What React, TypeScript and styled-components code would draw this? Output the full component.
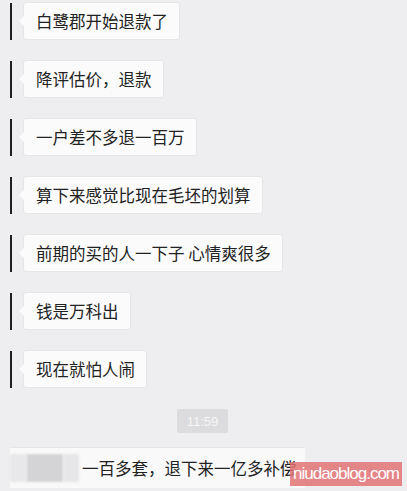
import React from 'react';
import styled, { createGlobalStyle } from 'styled-components';

const GlobalStyle = createGlobalStyle`
    html, body {
        margin: 0;
        padding: 0;
        background: #eeeef0;
        overflow: hidden;
    }
    body {
        font-family: "Noto Sans CJK SC", "Noto Sans", sans-serif;
    }
`;

const Screen = styled.div`
    position: relative;
    width: 407px;
    height: 491px;
    background: #eeeef0;
    padding-top: 2px;
    box-sizing: border-box;
    display: flex;
    flex-direction: column;
    gap: 20px;
`;

const Row = styled.div`
    display: flex;
    align-items: stretch;
    height: 38px;
`;

const Edge = styled.div`
    width: 1.5px;
    margin: 1px 11.5px 0 10px;
    background: #1f1f21;
`;

const Bubble = styled.div`
    position: relative;
    display: flex;
    align-items: center;
    padding: 0 11px 0 12px;
    background: #fbfbfb;
    border: 1px solid #e6e6e8;
    border-radius: 3px;
    font-size: 16.5px;
    color: #222222;
    white-space: nowrap;

    &::before {
        content: '';
        position: absolute;
        left: -5px;
        top: 13px;
        border-top: 5px solid transparent;
        border-bottom: 5px solid transparent;
        border-right: 5px solid #fbfbfb;
    }
`;

const TimeRow = styled.div`
    display: flex;
    justify-content: center;
    margin: 1px 0 -6px;
    padding-right: 2px;
`;

const Stamp = styled.div`
    width: 51px;
    height: 24px;
    background: #dcdcde;
    color: #f6f6f6;
    font-family: "Liberation Sans", Arial, sans-serif;
    font-size: 13px;
    display: flex;
    align-items: center;
    justify-content: center;
    border-radius: 2px;
`;

const LastBubble = styled.div`
    display: flex;
    align-items: center;
    width: 295px;
    height: 40px;
    margin-left: 10px;
    background: #f9f9f9;
    border-top: 1px solid #e6e6e8;
    font-size: 16.5px;
    color: #222222;
    white-space: nowrap;
`;

const Blur = styled.div<{ w: number; shade: string }>`
    width: ${p => p.w}px;
    height: 28px;
    background: ${p => p.shade};
    filter: blur(1px);
`;

const LastText = styled.span`
    margin-left: 3px;
`;

const Watermark = styled.div`
    position: absolute;
    left: 290px;
    top: 462px;
    width: 112px;
    height: 24px;
    background: rgba(226, 110, 112, 0.82);
    color: #ffffff;
    font-family: "Liberation Sans", Arial, sans-serif;
    font-size: 17px;
    letter-spacing: -1px;
    display: flex;
    align-items: center;
    justify-content: center;
`;

const messages = [
    '白鹭郡开始退款了',
    '降评估价，退款',
    '一户差不多退一百万',
    '算下来感觉比现在毛坯的划算',
    '前期的买的人一下子 心情爽很多',
    '钱是万科出',
    '现在就怕人闹',
];

export default function App() {
    return (
        <>
            <GlobalStyle />
            <Screen>
                {messages.map(m => (
                    <Row key={m}>
                        <Edge />
                        <Bubble>{m}</Bubble>
                    </Row>
                ))}
                <TimeRow>
                    <Stamp>11:59</Stamp>
                </TimeRow>
                <LastBubble>
                    <Blur w={17} shade="#e8e8ea" />
                    <Blur w={36} shade="#d4d4d6" />
                    <Blur w={16} shade="#e6e6e8" />
                    <LastText>一百多套，退下来一亿多补偿</LastText>
                </LastBubble>
                <Watermark>niudaoblog.com</Watermark>
            </Screen>
        </>
    );
}
